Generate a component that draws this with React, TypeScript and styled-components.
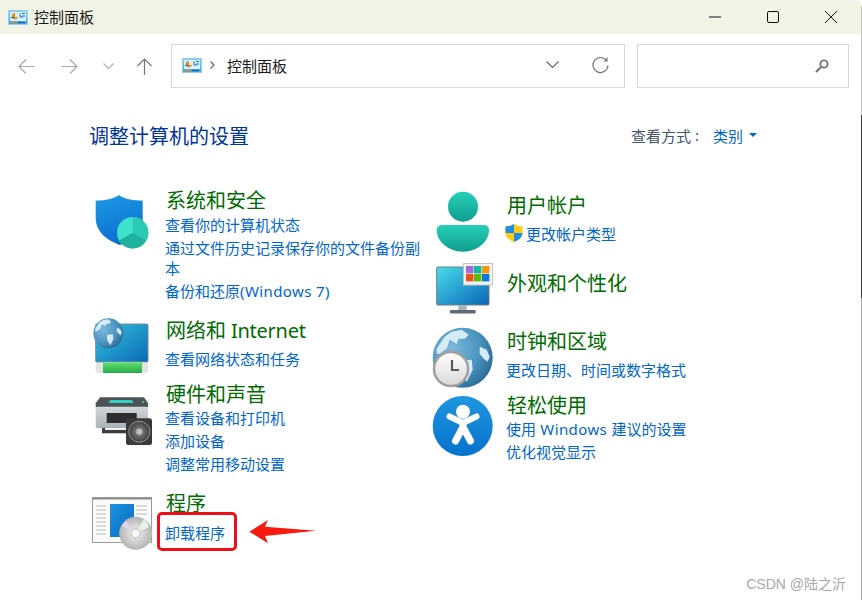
import React from "react";
import styled, { createGlobalStyle } from "styled-components";

const Global = createGlobalStyle`
  html, body { margin: 0; padding: 0; background: #fff; }
  body { font-family: "Noto Sans", "Noto Sans CJK SC", sans-serif; }
`;

const Window = styled.div`
  position: relative;
  width: 862px;
  height: 600px;
  box-sizing: border-box;
  display: flex;
  flex-direction: column;
  overflow: hidden;
  background: #fff;
`;

const WindowEdge = styled.div`
  position: absolute;
  right: 0;
  top: 6px;
  bottom: 0;
  width: 1px;
  background: linear-gradient(#c4c4c4 0 109px, #3a3a3a 109px 292px, #a8a8a8 292px);
`;

const TitleBar = styled.header`
  height: 34px;
  flex: none;
  background: #f1f4e5;
  display: flex;
  align-items: center;
  padding-left: 8px;
  border-top-right-radius: 8px;
`;

const TitleText = styled.span`
  margin-left: 6px;
  font-size: 15px;
  line-height: 20px;
  color: #1a1a1a;
  flex: 1;
`;

const WinButtons = styled.div`
  display: flex;
  align-items: center;
  margin-right: 25px;
  gap: 46px;
`;

const Toolbar = styled.nav`
  height: 66px;
  flex: none;
  box-sizing: border-box;
  padding: 10px 13px 12px 11px;
  display: flex;
  align-items: center;
`;

const NavButton = styled.span<{ $w: number }>`
  width: ${(p) => p.$w}px;
  height: 20px;
  flex: none;
  display: flex;
  align-items: center;
  justify-content: center;
`;

const AddressBox = styled.div`
  margin-left: 2px;
  width: 454px;
  height: 44px;
  flex: none;
  box-sizing: border-box;
  border: 1.5px solid #d9d9d9;
  display: flex;
  align-items: center;
  padding: 0 15px 2px 10px;
`;

const Crumb = styled.span`
  margin-left: 12px;
  font-size: 15px;
  color: #1a1a1a;
  flex: 1;
`;

const Sep = styled.span`
  margin-left: 8px;
  display: flex;
`;

const SearchBox = styled.div`
  margin-left: 12px;
  width: 212px;
  height: 44px;
  flex: none;
  box-sizing: border-box;
  border: 1.5px solid #d9d9d9;
  display: flex;
  align-items: center;
  justify-content: flex-end;
  padding-right: 19px;
`;

const Content = styled.main`
  flex: 1;
  padding: 23px 0 0 89px;
`;

const Header = styled.div`
  display: flex;
  align-items: center;
  justify-content: space-between;
  height: 28px;
  margin-bottom: 37px;
  padding-right: 105px;
`;

const Heading = styled.h1`
  margin: 0;
  font-size: 20px;
  font-weight: 400;
  line-height: 28px;
  color: #003399;
`;

const ViewBy = styled.div`
  display: flex;
  align-items: center;
  font-size: 15px;
  color: #44546a;
  margin-bottom: 4px;
`;

const Colon = styled.span`
  margin-left: 4px;
`;

const ViewValue = styled.span`
  margin-left: 14px;
  color: #0066cc;
  font-size: 15px;
`;

const Caret = styled.span`
  margin-left: 6px;
  width: 0;
  height: 0;
  border-left: 4px solid transparent;
  border-right: 4px solid transparent;
  border-top: 4px solid #0066cc;
`;

const Columns = styled.div`
  display: grid;
  grid-template-columns: 344px 1fr;
`;

const Column = styled.div<{ $indent?: number; $top?: number }>`
  margin-left: ${(p) => p.$indent ?? 0}px;
  margin-top: ${(p) => p.$top ?? 0}px;
  display: flex;
  flex-direction: column;
`;

const Category = styled.section<{ $height?: number }>`
  ${(p) => (p.$height ? `height: ${p.$height}px;` : "")}
  display: flex;
  column-gap: 13px;
  align-items: flex-start;
`;

const IconSlot = styled.svg`
  width: 60px;
  height: 60px;
  flex: none;
  overflow: visible;
`;

const Text = styled.div<{ $pad?: number }>`
  width: 262px;
  padding-top: ${(p) => (p.$pad ?? 0) + 1}px;
`;

const CatTitle = styled.h2<{ $gap?: number }>`
  margin: 0 0 ${(p) => p.$gap ?? 2}px;
  padding-left: 1px;
  font-size: 20px;
  line-height: 24px;
  font-weight: 400;
  color: #006b00;
  white-space: nowrap;
`;

const TitleLatin = styled.span`
  letter-spacing: -0.25px;
`;

const TaskLink = styled.a`
  display: block;
  font-size: 15px;
  line-height: 20px;
  margin-bottom: 3px;
  color: #0066cc;
  word-break: break-all;
`;

const Latin = styled.span`
  letter-spacing: 0.4px;
`;

const UacShield = styled.svg`
  display: inline-block;
  vertical-align: top;
  width: 18px;
  height: 18px;
  margin: 0 3px 0 -1px;
`;

const Highlight = styled.div`
  position: absolute;
  left: 157px;
  top: 512px;
  width: 80px;
  height: 39px;
  box-sizing: border-box;
  border: 3px solid #ee1018;
  border-radius: 5px;
`;

const Pointer = styled.svg`
  position: absolute;
  left: 248px;
  top: 518px;
  width: 70px;
  height: 27px;
`;

const Watermark = styled.div`
  position: absolute;
  right: 16px;
  bottom: 7px;
  font-family: "Liberation Sans", "Noto Sans CJK SC", sans-serif;
  font-size: 14px;
  line-height: 18px;
  color: #a8a8a8;
`;

const PanelGlyph = () => (
  <svg width="20" height="15" viewBox="0 0 20 15">
    <defs>
      <linearGradient id="pg" x1="0" y1="0" x2="0" y2="1">
        <stop offset="0" stopColor="#7fd4f5" />
        <stop offset="1" stopColor="#3aa5e4" />
      </linearGradient>
    </defs>
    <rect x="0.5" y="0.5" width="19" height="14" fill="url(#pg)" stroke="#9fcbe6" />
    <rect x="2" y="2" width="16" height="9" fill="#d9f1fb" />
    <path d="M7 3a3.2 3.2 0 1 0 3 4H7z" fill="#e88b1c" />
    <path d="M3 7.5h3" stroke="#1f6fb2" strokeWidth="1" />
    <path d="M12 7h3M14 3.5h3M14 6h3M12 3.5v3.5" stroke="#1f6fb2" strokeWidth="1" fill="none" />
    <path d="M3 12.5h6" stroke="#e8861c" strokeWidth="1.2" />
    <path d="M10 12.5h7" stroke="#0f5fa8" strokeWidth="1.2" />
  </svg>
);

const ShieldIcon = () => (
  <IconSlot viewBox="0 0 60 60">
    <defs>
      <linearGradient id="sh1" x1="0" y1="0" x2="0.3" y2="1">
        <stop offset="0" stopColor="#1f9be6" />
        <stop offset="1" stopColor="#0a6fd0" />
      </linearGradient>
    </defs>
    <path d="M27 7c5 4 13 5.500 23.700 5.500V32C50.700 45 38 53 28 57 17 53 3.700 45 3.700 30V12.500C14 12.500 21 11 27 7z" fill="url(#sh1)" />
    <circle cx="40.700" cy="44.700" r="15.700" fill="#3fe0cc" />
    <path d="M40.700 44.700V29A15.700 15.700 0 0 1 54.300 52.500z" fill="#2cc9b4" />
    <path d="M40.700 44.700L54.300 52.500A15.700 15.700 0 0 1 27 52.500z" fill="#1fb29f" />
  </IconSlot>
);

const GlobeArt = ({ cx, cy, r, id }: { cx: number; cy: number; r: number; id: string }) => (
  <g transform={`translate(${cx} ${cy}) scale(${r / 30})`}>
    <defs>
      <radialGradient id={id} cx="0.32" cy="0.35" r="0.85">
        <stop offset="0" stopColor="#7db8da" />
        <stop offset="0.55" stopColor="#4a94bf" />
        <stop offset="1" stopColor="#1c5a84" />
      </radialGradient>
    </defs>
    <circle cx="0" cy="0" r="30" fill={`url(#${id})`} />
    <g fill="#d6ebf5">
      <path d="M-26-9L-18-21-11-26-1-28 6-23 2-19-4-19-6-14-13-18-16-9-23-4-26-4z" />
      <path d="M17-11L24-8 27-1 25 4 21 1 17-4z" />
      <path d="M-3 3L9 2 10 12 4 24-2 14z" />
    </g>
  </g>
);

const NetworkIcon = () => (
  <IconSlot viewBox="0 0 60 60">
    <defs>
      <linearGradient id="nw" x1="0" y1="0" x2="1" y2="1">
        <stop offset="0" stopColor="#35c4dc" />
        <stop offset="1" stopColor="#0b6ab8" />
      </linearGradient>
      <linearGradient id="nw2" x1="0" y1="0" x2="0" y2="1">
        <stop offset="0" stopColor="#5fe06a" />
        <stop offset="1" stopColor="#26a848" />
      </linearGradient>
    </defs>
    <rect x="3.700" y="6" width="52.300" height="38" rx="1" fill="url(#nw)" stroke="#7d8a94" />
    <rect x="3.700" y="45" width="52.300" height="10" rx="2" fill="#e4e4e4" />
    <rect x="11" y="44.500" width="39" height="10.500" rx="1" fill="url(#nw2)" />
    <GlobeArt cx={16.300} cy={15.300} r={15} id="nwg" />
  </IconSlot>
);

const PrinterIcon = () => (
  <IconSlot viewBox="0 0 60 60">
    <defs>
      <linearGradient id="pr" x1="0" y1="0" x2="0" y2="1">
        <stop offset="0" stopColor="#d3d7db" />
        <stop offset="1" stopColor="#aab0b6" />
      </linearGradient>
      <radialGradient id="pr2">
        <stop offset="0" stopColor="#c4c4c4" />
        <stop offset="0.4" stopColor="#6e6e6e" />
        <stop offset="1" stopColor="#3b3b3b" />
      </radialGradient>
    </defs>
    <path d="M8 15.300h44l4 6v4H3.700v-4z" fill="#4e5358" />
    <path d="M18 18h22l1.500 3H17z" fill="#2fd0c0" />
    <rect x="50" y="19" width="2" height="2" fill="#37c65a" />
    <rect x="3.700" y="24.700" width="52.300" height="21.600" rx="2" fill="url(#pr)" />
    <rect x="14.700" y="31" width="30" height="10" fill="#2c2e30" />
    <rect x="10" y="46" width="25" height="5.300" fill="#3b3e42" />
    <rect x="13" y="46" width="21" height="2" fill="#f1f1f1" />
    <rect x="34" y="36.300" width="26" height="26.700" rx="2.500" fill="#3a3a3a" />
    <circle cx="47.300" cy="49.700" r="10.500" fill="url(#pr2)" stroke="#9a9a9a" strokeWidth="1" />
    <circle cx="47.300" cy="49.700" r="3" fill="#bfbfbf" />
  </IconSlot>
);

const ProgramIcon = () => (
  <IconSlot viewBox="0 0 60 60">
    <defs>
      <linearGradient id="pgb" x1="0" y1="0" x2="1" y2="1">
        <stop offset="0" stopColor="#1c93df" />
        <stop offset="1" stopColor="#0a6cc4" />
      </linearGradient>
      <radialGradient id="dsk" cx="0.5" cy="0.5" r="0.6">
        <stop offset="0" stopColor="#f2f2f2" />
        <stop offset="0.5" stopColor="#cdcdcd" />
        <stop offset="1" stopColor="#a9a9a9" />
      </radialGradient>
    </defs>
    <rect x="0.500" y="6.500" width="59" height="45" fill="#fafafa" stroke="#9c9c9c" />
    <rect x="0.500" y="6.500" width="59" height="2" fill="#8e8e8e" />
    <path d="M4 15h10M4 19h10M4 23h10M4 27h10M4 31h10M4 35h10M4 39h10M4 43h10M44 15h11M44 19h11M44 23h11" stroke="#cfcfcf" strokeWidth="1.500" />
    <rect x="18" y="13" width="24" height="33" fill="url(#pgb)" />
    <circle cx="43.700" cy="42.300" r="16.500" fill="url(#dsk)" />
    <path d="M43.700 42.300L52 28a16.500 16.500 0 0 1 5 8z" fill="#e6f3e6" />
    <path d="M43.700 42.300L30 35a16.500 16.500 0 0 1 4-5z" fill="#e2d5ea" />
    <circle cx="43.700" cy="42.300" r="4.500" fill="#f7f7f7" stroke="#bdbdbd" />
  </IconSlot>
);

const UserIcon = () => (
  <IconSlot viewBox="0 0 60 60">
    <defs>
      <linearGradient id="usr" x1="0" y1="0" x2="0" y2="1">
        <stop offset="0" stopColor="#27d1b9" />
        <stop offset="1" stopColor="#0f9d8e" />
      </linearGradient>
    </defs>
    <circle cx="30" cy="16.700" r="15" fill="url(#usr)" />
    <path d="M9 35h42c3 0 5 2 5 5 0 12-12 21.700-26 21.700S3.700 52 3.700 40c0-3 2.300-5 5.300-5z" fill="url(#usr)" />
  </IconSlot>
);

const MonitorIcon = () => (
  <IconSlot viewBox="0 0 60 60">
    <defs>
      <linearGradient id="mon" x1="0" y1="0" x2="1" y2="1">
        <stop offset="0" stopColor="#47dcea" />
        <stop offset="1" stopColor="#0a66b6" />
      </linearGradient>
    </defs>
    <rect x="3.700" y="5" width="52.300" height="38" rx="1" fill="url(#mon)" stroke="#6f7c86" />
    <rect x="25.300" y="43" width="8.400" height="5" fill="#a8b2b8" />
    <rect x="17" y="48" width="25.700" height="3.500" rx="1" fill="#5f6a72" />
    <rect x="30.500" y="1.500" width="29" height="21.500" fill="#f4f4f4" stroke="#c4c4c4" />
    <rect x="33" y="4" width="7.400" height="7.400" fill="#9b6fd6" />
    <rect x="41" y="4" width="7.400" height="7.400" fill="#18b8a0" />
    <rect x="49" y="4" width="7.400" height="7.400" fill="#f59a12" />
    <rect x="33" y="12" width="7.400" height="7.400" fill="#e8540f" />
    <rect x="41" y="12" width="7.400" height="7.400" fill="#5db90e" />
    <rect x="49" y="12" width="7.400" height="7.400" fill="#0a78d7" />
  </IconSlot>
);

const ClockIcon = () => (
  <IconSlot viewBox="0 0 60 60">
    <defs>
      <linearGradient id="clk" x1="0" y1="0" x2="0" y2="1">
        <stop offset="0" stopColor="#ffffff" />
        <stop offset="1" stopColor="#d9d9d9" />
      </linearGradient>
    </defs>
    <GlobeArt cx={29.700} cy={29.700} r={30} id="clg" />
    <circle cx="18" cy="41" r="17" fill="url(#clk)" stroke="#a0a0a0" strokeWidth="2.500" />
    <path d="M19 32v10h7" fill="none" stroke="#5a5a5a" strokeWidth="2.200" />
  </IconSlot>
);

const AccessIcon = () => (
  <IconSlot viewBox="0 0 60 60">
    <defs>
      <linearGradient id="acc" x1="0" y1="0" x2="0" y2="1">
        <stop offset="0" stopColor="#1f97e0" />
        <stop offset="1" stopColor="#0672cd" />
      </linearGradient>
    </defs>
    <circle cx="29.700" cy="33" r="30" fill="url(#acc)" />
    <circle cx="30" cy="18.700" r="7" fill="#fff" />
    <path d="M16.500 23.500L30 30l13.500-6.500" fill="none" stroke="#fff" strokeWidth="6" strokeLinecap="round" strokeLinejoin="round" />
    <path d="M30 30v6M30 34l-7.500 14M30 34l7.500 14" fill="none" stroke="#fff" strokeWidth="7" strokeLinecap="round" strokeLinejoin="round" />
  </IconSlot>
);

export default function App() {
  return (
    <>
      <Global />
      <Window>
        <TitleBar>
          <PanelGlyph />
          <TitleText>控制面板</TitleText>
          <WinButtons>
            <svg width="12" height="12" viewBox="0 0 12 12"><path d="M0 6h12" stroke="#111" strokeWidth="1" /></svg>
            <svg width="12" height="12" viewBox="0 0 12 12"><rect x="0.500" y="0.500" width="11" height="11" rx="1.500" fill="none" stroke="#111" strokeWidth="1" /></svg>
            <svg width="12" height="12" viewBox="0 0 12 12"><path d="M0 0l12 12M12 0L0 12" stroke="#111" strokeWidth="1" /></svg>
          </WinButtons>
        </TitleBar>
        <Toolbar>
          <NavButton $w={30}>
            <svg width="17" height="15" viewBox="0 0 17 15"><path d="M16.500 7.500H1M8 .5l-7 7 7 7" fill="none" stroke="#a8a8a8" strokeWidth="1.200" /></svg>
          </NavButton>
          <NavButton $w={56}>
            <svg width="17" height="15" viewBox="0 0 17 15"><path d="M.5 7.500H16M9 .5l7 7-7 7" fill="none" stroke="#a8a8a8" strokeWidth="1.200" /></svg>
          </NavButton>
          <NavButton $w={22}>
            <svg width="11" height="7" viewBox="0 0 11 7"><path d="M.5.5l5 5 5-5" fill="none" stroke="#b0b0b0" strokeWidth="1.200" /></svg>
          </NavButton>
          <NavButton $w={50}>
            <svg width="15" height="17" viewBox="0 0 15 17"><path d="M7.500 17V1M.5 8l7-7 7 7" fill="none" stroke="#777" strokeWidth="1.200" /></svg>
          </NavButton>
          <AddressBox>
            <PanelGlyph />
            <Sep>
              <svg width="5" height="8" viewBox="0 0 5 8"><path d="M.5.5L4 4 .5 7.500" fill="none" stroke="#666" strokeWidth="1.200" /></svg>
            </Sep>
            <Crumb>控制面板</Crumb>
            <svg width="13" height="8" viewBox="0 0 13 8" style={{ marginRight: 33 }}><path d="M.5.500l6 6 6-6" fill="none" stroke="#666" strokeWidth="1.200" /></svg>
            <svg width="17" height="17" viewBox="0 0 17 17"><path d="M14.500 3.500A7.500 7.500 0 1 0 16 8.500M15 .5v3.500h-3.500" fill="none" stroke="#777" strokeWidth="1.200" /></svg>
          </AddressBox>
          <SearchBox>
            <svg width="14" height="14" viewBox="0 0 14 14"><circle cx="9" cy="5" r="3.700" fill="none" stroke="#777" strokeWidth="1.800" /><path d="M6 8L1 13" stroke="#777" strokeWidth="2.200" /></svg>
          </SearchBox>
        </Toolbar>
        <Content>
          <Header>
            <Heading>调整计算机的设置</Heading>
            <ViewBy>
              查看方式<Colon>:</Colon>
              <ViewValue>类别</ViewValue>
              <Caret />
            </ViewBy>
          </Header>
          <Columns>
            <Column $indent={3}>
              <Category $height={130}>
                <ShieldIcon />
                <Text>
                  <CatTitle>系统和安全</CatTitle>
                  <TaskLink>查看你的计算机状态</TaskLink>
                  <TaskLink>通过文件历史记录保存你的文件备份副本</TaskLink>
                  <TaskLink>备份和还原<Latin>(Windows 7)</Latin></TaskLink>
                </Text>
              </Category>
              <Category $height={64}>
                <NetworkIcon />
                <Text>
                  <CatTitle $gap={6}>网络和<TitleLatin> Internet</TitleLatin></CatTitle>
                  <TaskLink>查看网络状态和任务</TaskLink>
                </Text>
              </Category>
              <Category $height={109}>
                <PrinterIcon />
                <Text>
                  <CatTitle $gap={1}>硬件和声音</CatTitle>
                  <TaskLink>查看设备和打印机</TaskLink>
                  <TaskLink>添加设备</TaskLink>
                  <TaskLink>调整常用移动设置</TaskLink>
                </Text>
              </Category>
              <Category>
                <ProgramIcon />
                <Text>
                  <CatTitle $gap={7}>程序</CatTitle>
                  <TaskLink>卸载程序</TaskLink>
                </Text>
              </Category>
            </Column>
            <Column $top={2}>
              <Category $height={72}>
                <UserIcon />
                <Text $pad={3}>
                  <CatTitle $gap={6}>用户帐户</CatTitle>
                  <TaskLink>
                    <UacShield viewBox="0 0 18 18">
                      <path d="M9 0c2.500 1.600 5 2.300 8.500 2.500v7C17.500 13.500 13 16.500 9 18 5 16.500.5 13.500.5 9.500v-7C4 2.300 6.500 1.600 9 0z" fill="#ffcc1a" />
                      <path d="M9 0c-2.500 1.600-5 2.300-8.500 2.500V9H9z" fill="#1f8fe0" />
                      <path d="M9 9h8.500c0 4.500-4.500 7.500-8.500 9z" fill="#1f8fe0" />
                    </UacShield>
                    更改帐户类型
                  </TaskLink>
                </Text>
              </Category>
              <Category $height={66}>
                <MonitorIcon />
                <Text $pad={9}>
                  <CatTitle>外观和个性化</CatTitle>
                </Text>
              </Category>
              <Category $height={65}>
                <ClockIcon />
                <Text $pad={1}>
                  <CatTitle $gap={6}>时钟和区域</CatTitle>
                  <TaskLink>更改日期、时间或数字格式</TaskLink>
                </Text>
              </Category>
              <Category>
                <AccessIcon />
                <Text>
                  <CatTitle $gap={1}>轻松使用</CatTitle>
                  <TaskLink>使用<Latin> Windows </Latin>建议的设置</TaskLink>
                  <TaskLink>优化视觉显示</TaskLink>
                </Text>
              </Category>
            </Column>
          </Columns>
        </Content>
        <WindowEdge />
        <Highlight />
        <Pointer viewBox="0 0 70 27">
          <path d="M1.300 13.700L20 2 17 8.700 68 12.700 17 18 20 25.300z" fill="#f71a0e" />
        </Pointer>
        <Watermark>CSDN @陆之沂</Watermark>
      </Window>
    </>
  );
}
